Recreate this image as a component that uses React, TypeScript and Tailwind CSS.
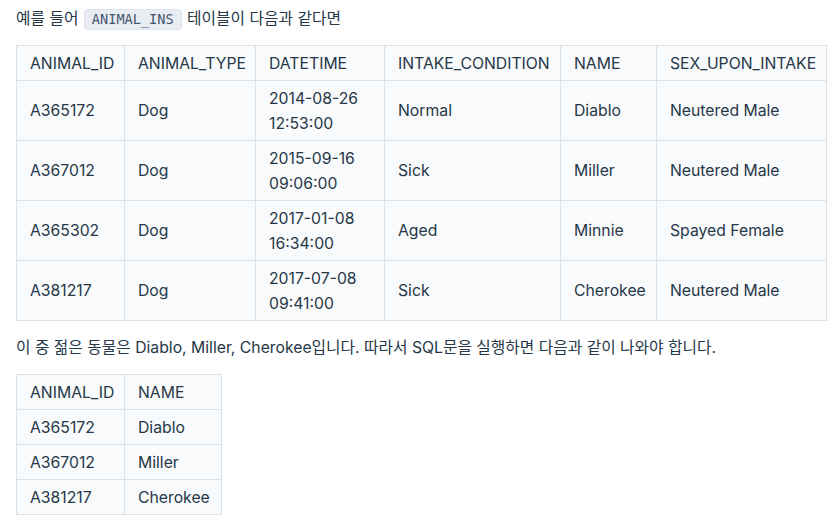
const intake = [
  ['A365172', 'Dog', '2014-08-26', '12:53:00', 'Normal', 'Diablo', 'Neutered Male'],
  ['A367012', 'Dog', '2015-09-16', '09:06:00', 'Sick', 'Miller', 'Neutered Male'],
  ['A365302', 'Dog', '2017-01-08', '16:34:00', 'Aged', 'Minnie', 'Spayed Female'],
  ['A381217', 'Dog', '2017-07-08', '09:41:00', 'Sick', 'Cherokee', 'Neutered Male'],
];

const result = [
  ['A365172', 'Diablo'],
  ['A367012', 'Miller'],
  ['A381217', 'Cherokee'],
];

const headers = ['ANIMAL_ID', 'ANIMAL_TYPE', 'DATETIME', 'INTAKE_CONDITION', 'NAME', 'SEX_UPON_INTAKE'];
const widths = ['w-[108px]', 'w-[131px]', 'w-[129px]', 'w-[176px]', 'w-[96px]', 'w-[170px]'];

const cell = 'border border-[#d7e2eb] bg-[#f9fafc] px-[13px] py-[4.5px] text-left font-normal align-middle whitespace-nowrap';

export default function App() {
  return (
    <div
      className="bg-white text-[#263747] text-[15.75px] leading-[25px] px-4 pt-[6px]"
      style={{ fontFamily: 'Inter, "Noto Sans CJK KR", sans-serif' }}
    >
      <p className="mb-[14px]">
        예를 들어{' '}
        <code
          className="inline-block rounded-[4px] border border-[#dde3ec] bg-[#e9ecf3] px-[7px] text-[13.6px] leading-[19px] text-[#44576c] mx-[1px]"
          style={{ fontFamily: '"DejaVu Sans Mono", monospace' }}
        >
          ANIMAL_INS
        </code>{' '}
        테이블이 다음과 같다면
      </p>

      <table className="table-fixed border-collapse w-[810px] mb-[14px]">
        <colgroup>
          {widths.map(w => <col key={w} className={w} />)}
        </colgroup>
        <thead>
          <tr>
            {headers.map(h => (
              <th key={h} className={cell}>{h}</th>
            ))}
          </tr>
        </thead>
        <tbody>
          {intake.map(r => (
            <tr key={r[0]}>
              <td className={cell}>{r[0]}</td>
              <td className={cell}>{r[1]}</td>
              <td className={cell}>{r[2]}<br />{r[3]}</td>
              <td className={cell}>{r[4]}</td>
              <td className={cell}>{r[5]}</td>
              <td className={cell}>{r[6]}</td>
            </tr>
          ))}
        </tbody>
      </table>

      <p className="mb-[14px]">
        이 중 젊은 동물은 Diablo, Miller, Cherokee입니다. 따라서 SQL문을 실행하면 다음과 같이 나와야 합니다.
      </p>

      <table className="table-fixed border-collapse w-[205px]">
        <colgroup>
          <col className="w-[108px]" />
          <col className="w-[97px]" />
        </colgroup>
        <thead>
          <tr>
            <th className={cell}>ANIMAL_ID</th>
            <th className={cell}>NAME</th>
          </tr>
        </thead>
        <tbody>
          {result.map(r => (
            <tr key={r[0]}>
              <td className={cell}>{r[0]}</td>
              <td className={cell}>{r[1]}</td>
            </tr>
          ))}
        </tbody>
      </table>
    </div>
  );
}
